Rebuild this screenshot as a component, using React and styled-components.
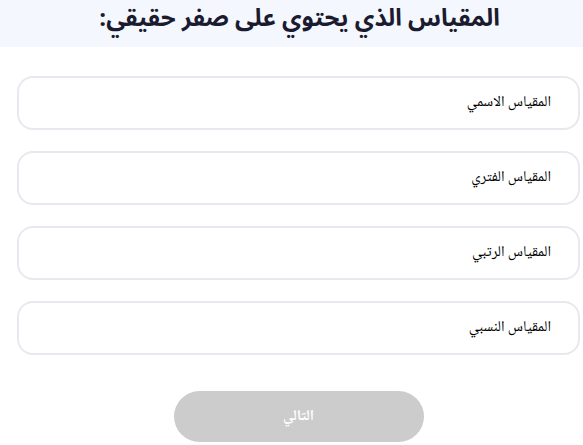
import React from "react";
import styled, { createGlobalStyle } from "styled-components";

const Global = createGlobalStyle`
  html, body { margin: 0; padding: 0; background: #ffffff; }
  body { font-family: "Noto Sans", "DejaVu Sans", sans-serif; }
`;

const Page = styled.div`
  width: 583px;
  direction: rtl;
`;

const Header = styled.header`
  box-sizing: border-box;
  height: 47px;
  padding-top: 1px;
  background: #f4f7fe;
  display: flex;
  align-items: flex-start;
  justify-content: center;
`;

const Title = styled.h1`
  margin: 0;
  font-family: "Noto Sans Arabic", "Noto Sans", "DejaVu Sans", sans-serif;
  font-weight: 700;
  font-size: 24px;
  line-height: 36px;
  color: #1b1b2f;
  transform: translateX(8px);
`;

const Options = styled.div`
  display: flex;
  flex-direction: column;
  gap: 21px;
  padding: 29px 3px 0 17px;
`;

const Option = styled.button`
  height: 54px;
  box-sizing: border-box;
  border: 2px solid #e7e9ee;
  border-radius: 16px;
  background: #ffffff;
  display: flex;
  align-items: center;
  justify-content: flex-start;
  padding: 0 27px 0 20px;
  font-family: "Noto Naskh Arabic", "DejaVu Sans", sans-serif;
  font-size: 15px;
  color: #000000;
  direction: rtl;
  text-align: right;
  cursor: pointer;
`;

const Footer = styled.div`
  display: flex;
  justify-content: center;
  padding: 36px 3px 0 17px;
`;

const NextButton = styled.button`
  width: 250px;
  height: 51px;
  border: none;
  border-radius: 26px;
  background: #cccccc;
  color: #ffffff;
  font-family: "Noto Naskh Arabic", "DejaVu Sans", sans-serif;
  font-weight: 700;
  font-size: 15px;
  direction: rtl;
  cursor: not-allowed;
`;

const options = ["المقياس الاسمي", "المقياس الفتري", "المقياس الرتبي", "المقياس النسبي"];

export default function App() {
  return (
    <Page>
      <Global />
      <Header>
        <Title>المقياس الذي يحتوي على صفر حقيقي:</Title>
      </Header>
      <Options>
        {options.map((o) => (
          <Option key={o}>{o}</Option>
        ))}
      </Options>
      <Footer>
        <NextButton disabled>التالي</NextButton>
      </Footer>
    </Page>
  );
}
